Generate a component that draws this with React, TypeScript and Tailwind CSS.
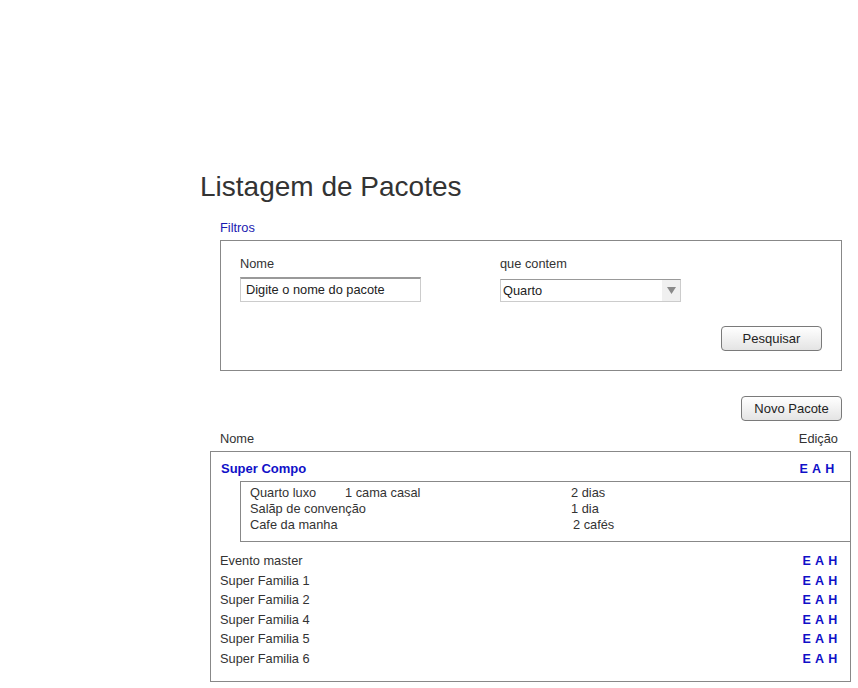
import React from 'react';

const font = { fontFamily: '"Liberation Sans", Arial, sans-serif' };

type Pacote = { nome: string };

const pacotes: Pacote[] = [
  { nome: 'Evento master' },
  { nome: 'Super Familia 1' },
  { nome: 'Super Familia 2' },
  { nome: 'Super Familia 4' },
  { nome: 'Super Familia 5' },
  { nome: 'Super Familia 6' },
];

function Acoes() {
  return <span className="text-[12.5px] font-bold tracking-[0.6px] text-[#1010c8]">E A H</span>;
}

function Botao({ children, className = '' }: { children: React.ReactNode; className?: string }) {
  return (
    <button
      type="button"
      className={`h-[25px] w-[101px] rounded-[4px] border border-[#7a7a7a] bg-gradient-to-b from-white to-[#e4e4e4] text-[13px] text-[#222] ${className}`}
    >
      {children}
    </button>
  );
}

export default function App() {
  return (
    <div className="min-h-[688px] w-[858px] bg-white text-[12.8px] leading-[16px] text-[#333]" style={font}>
      <div className="w-[651px] pl-[200px] pt-[172px]">
        <h1 className="text-[28px] leading-[30px] font-normal text-[#333]">Listagem de Pacotes</h1>

        <div className="ml-[20px] w-[622px]">
          <p className="mt-[18px] text-[#1a1ab0]">Filtros</p>
          <div className="mt-[4px] h-[131px] border border-[#888] px-[19px] pt-[15px]">
            <div className="flex">
              <div className="w-[260px]">
                <p>Nome</p>
                <div className="mt-[5px] flex h-[25px] w-[181px] items-center border border-[#ccc] border-t-[#999] border-t-2 px-[5px] text-[#222]">
                  Digite o nome do pacote
                </div>
              </div>
              <div>
                <p>que contem</p>
                <div className="mt-[7px] flex h-[23px] w-[181px] items-center justify-between border border-[#ccc] border-t-[#999] pl-[2px] text-[#222]">
                  <span>Quarto</span>
                  <span className="flex h-full w-[18px] items-center justify-center bg-[#f0f0f0]">
                    <svg width="9" height="7" viewBox="0 0 9 7">
                      <path d="M0 0 L9 0 L4.5 7 Z" fill="#8a8a8a" />
                    </svg>
                  </span>
                </div>
              </div>
            </div>
            <div className="mt-[24px] flex justify-end">
              <Botao>Pesquisar</Botao>
            </div>
          </div>
          <div className="mt-[25px] flex justify-end">
            <Botao className="h-[24px]">Novo Pacote</Botao>
          </div>
        </div>

        <div className="ml-[20px] mt-[10px] flex w-[618px] justify-between">
          <span>Nome</span>
          <span>Edição</span>
        </div>

        <div className="ml-[10px] mt-[4px] w-[641px] border border-[#888] pb-[14px]">
          <div className="flex justify-between pl-[10px] pr-[15px] pt-[9px] text-[13px]">
            <span className="font-bold text-[#1010c8]">Super Compo</span>
            <Acoes />
          </div>
          <div className="ml-[29px] mt-[4px] border-y border-l border-[#888] pb-[8px] pl-[9px] pt-[3px]">
            <div className="flex">
              <span className="w-[95px]">Quarto luxo</span>
              <span className="w-[226px]">1 cama casal</span>
              <span>2 dias</span>
            </div>
            <div className="flex">
              <span className="w-[321px]">Salãp de convenção</span>
              <span>1 dia</span>
            </div>
            <div className="flex">
              <span className="w-[323px]">Cafe da manha</span>
              <span>2 cafés</span>
            </div>
          </div>
          <div className="mt-[11px] flex flex-col gap-[3.6px] pl-[9px] pr-[12px]">
            {pacotes.map((p) => (
              <div key={p.nome} className="flex justify-between">
                <span>{p.nome}</span>
                <Acoes />
              </div>
            ))}
          </div>
        </div>
      </div>
    </div>
  );
}
